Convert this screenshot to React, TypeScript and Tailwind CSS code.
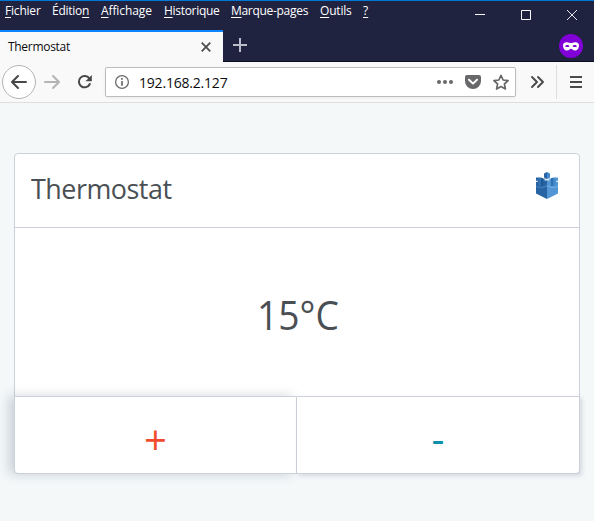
import React from "react";

const menus = [
  { key: "F", rest: "ichier", style: "w-[47px] tracking-[-0.2px]" },
  { key: "n", before: "Éditio", rest: "", style: "w-[49px] tracking-[-0.25px]" },
  { key: "A", rest: "ffichage", style: "w-[63px] tracking-[-0.1px]" },
  { key: "H", rest: "istorique", style: "w-[67px] tracking-[-0.3px]" },
  { key: "M", rest: "arque-pages", style: "w-[89px] tracking-[-0.3px]" },
  { key: "O", rest: "utils", style: "w-[43px] tracking-[-0.2px]" },
  { key: "?", rest: "", style: "w-[12px]" },
];

function TitleBar() {
  return (
    <div className="flex h-[30px] shrink-0 items-start justify-between border-t border-[#0078d7]">
      <div className="flex pl-[5px] pt-[2px] text-[12px] leading-[16px] text-white">
        {menus.map((m) => (
          <span key={m.key} className={`whitespace-nowrap ${m.style}`}>
            {m.before}
            <span className="underline underline-offset-2">{m.key}</span>
            {m.rest}
          </span>
        ))}
      </div>
      <svg width="138" height="29" viewBox="456 1 138 29" fill="none" stroke="#fff" className="shrink-0">
        <path d="M475 14.5h10M521.5 10.5h9v9h-9z" />
        <path d="M567 10l10 10M577 10l-10 10" strokeWidth=".9" />
      </svg>
    </div>
  );
}

function TabStrip() {
  return (
    <div className="flex h-8 shrink-0 border-b border-[#0c0c1f]">
      <div className="-mb-px flex w-[223px] items-center justify-between border-t-2 border-[#0a84ff] bg-[#f9f9fa] pl-2 pr-3 text-[12px] text-[#0c0c0d]">
        <span className="tracking-[-0.3px]">Thermostat</span>
        <svg width="10" height="10" viewBox="0 0 10 10" stroke="#4a4a4c" strokeWidth="1.7">
          <path d="M.7.7l8.6 8.6M9.3.7L.7 9.3" />
        </svg>
      </div>
      <svg width="34" height="31" viewBox="223 30 34 31" stroke="#bcbdca" strokeWidth="2">
        <path d="M233 45h14M240 38v14" />
      </svg>
      <div className="grow" />
      <svg width="40" height="31" viewBox="554 30 40 31">
        <circle cx="571" cy="46" r="12" fill="#8000d7" />
        <path
          d="M563 45.2c0-2.4 2-3.2 4.2-3 1.6.1 2.5.9 3.8.9s2.200-.8 3.800-.9c2.200-.2 4.200.6 4.200 3 0 3-1.500 5.300-4.200 5.300-2 0-2.600-1.700-3.800-1.700s-1.800 1.700-3.800 1.700c-2.700 0-4.200-2.300-4.200-5.300z"
          fill="#fff"
        />
        <path d="M565 46.200c1-1.600 3.500-1.600 4.500 0-1 1.200-3.500 1.200-4.500 0zM572.500 46.200c1-1.600 3.500-1.600 4.500 0-1 1.200-3.500 1.200-4.500 0z" fill="#8000d7" />
      </svg>
    </div>
  );
}

function NavBar() {
  return (
    <div className="flex h-[41px] shrink-0 items-center border-b border-[#dededf] bg-[#f9f9fa]">
      <svg width="105" height="40" viewBox="0 62 105 40" fill="none" strokeWidth="2" strokeLinecap="round" strokeLinejoin="round" className="shrink-0">
        <circle cx="19" cy="82" r="16.500" fill="#fff" stroke="#b4b4b5" strokeWidth="1" />
        <path d="M26 82H12.500M18 76l-6 6 6 6" stroke="#47474a" />
        <path d="M45 82h13.500M53 76l6 6-6 6" stroke="#b4b4b5" />
        <path d="M89.300 78.400a5.700 5.700 0 1 0 .5 5.600" stroke="#47474a" />
        <path d="M91.800 75v6.200h-6.300z" fill="#47474a" />
      </svg>
      <div className="flex h-[30px] w-[411px] shrink-0 items-center rounded-[2px] border border-[#bdbdbe] bg-white shadow-[0_1px_3px_rgba(0,0,0,0.06)]">
        <svg width="33" height="28" viewBox="106 68 33 28" fill="none" stroke="#6b6b6d">
          <circle cx="122" cy="82" r="6.400" strokeWidth="1.300" />
          <path d="M122 81v4.700M122 78v1.700" strokeWidth="1.700" />
        </svg>
        <span className="grow pt-[2px] text-[14px] leading-5 tracking-[-0.2px] text-[#0c0c0d]">192.168.2.127</span>
        <svg width="80" height="28" viewBox="435 68 80 28" fill="#68686a">
          <circle cx="439" cy="82" r="2" />
          <circle cx="445" cy="82" r="2" />
          <circle cx="451" cy="82" r="2" />
          <path d="M467 75h12q2 0 2 2v4a8 8 0 0 1-16 0v-4q0-2 2-2z" />
          <path d="M469 79.800l4 3.800 4-3.800" fill="none" stroke="#fff" strokeWidth="2" strokeLinecap="round" strokeLinejoin="round" />
          <path d="M501 75.400l2.100 4.600 5 .6-3.700 3.400 1 5-4.400-2.500-4.400 2.500 1-5-3.700-3.400 5-.6z" fill="none" stroke="#68686a" strokeWidth="1.700" strokeLinejoin="round" />
        </svg>
      </div>
      <svg width="78" height="40" viewBox="516 62 78 40" fill="none" stroke="#4a4a4c" strokeWidth="2" strokeLinecap="round" strokeLinejoin="round">
        <path d="M532 77l5 5-5 5M538 77l5 5-5 5" strokeWidth="1.900" />
        <path d="M556.500 65v34" stroke="#dededf" strokeWidth="1" strokeLinecap="butt" />
        <path d="M570 77h12M570 82h12M570 87h12" strokeLinecap="butt" />
      </svg>
    </div>
  );
}

function AwsLogo() {
  return (
    <svg width="24" height="28" viewBox="0 0 24 28" className="mt-[18px]">
      <path d="M1 5.500h5l2 1h4V27L1 21.500z" fill="#2864a4" />
      <path d="M23 5.500h-5l-2 1h-4V27l11-5.500z" fill="#5296d6" />
      <path d="M3.500 6h4v8l-4-.5z" fill="#2f72b3" />
      <path d="M6 6l2 .5V14l-2-.5z" fill="#1f5792" />
      <path d="M20.500 6h-4v8l4-.5z" fill="#4289cc" />
      <path d="M18 6l-2 .5V14l2-.5z" fill="#2f6dac" />
      <path d="M1 14l3 .8h4l4-1.600v1.200l-4 1.400H4L1 15z" fill="#4583bf" />
      <path d="M23 14l-3 .8h-4l-4-1.600v1.200l4 1.400h4l3-.8z" fill="#77ade0" />
      <path d="M12 0L9 1.500v4l3 1.300z" fill="#2864a4" />
      <path d="M12 0l3 1.500v4l-3 1.300z" fill="#4089cd" />
      <path d="M9.500 7h5v1.500h-5z" fill="#dbe7f2" />
      <path d="M1 8.700h1.800V10H1zM21.200 8.700H23V10h-1.800z" fill="#dbe7f2" />
    </svg>
  );
}

function ThermostatCard() {
  return (
    <section className="mx-[14px] mt-[50px] flex h-[321px] w-[566px] flex-col rounded-[4px] border border-[#ccd1d9] bg-white text-[#4a4f54]">
      <header className="flex h-[74px] shrink-0 items-start justify-between border-b border-[#ccd1d9] pl-4 pr-[20px]">
        <h1 className="origin-left scale-x-[0.96] pt-[14px] text-[28px] leading-10 tracking-[-0.5px]">Thermostat</h1>
        <AwsLogo />
      </header>
      <div className="flex h-[168px] shrink-0 items-center justify-center pt-[6px] text-[40px] leading-none">
        <span className="scale-x-[0.93] pl-[2px]">15°C</span>
      </div>
      <div className="isolate -mx-px -mb-px flex grow">
        <button className="flex w-[283px] items-center justify-center rounded-bl-[4px] border border-[#ccd1d9] bg-white pt-[9px] text-[40px] leading-none text-[#f04b2d] shadow-[-5px_0_12px_rgba(70,80,110,0.24)]">
          +
        </button>
        <button className="flex w-[283px] items-center justify-center rounded-br-[4px] border border-l-0 border-[#ccd1d9] bg-white pt-[6px] text-[40px] leading-none text-[#0d8fae] shadow-[2px_2px_4px_rgba(70,80,110,0.18)]">
          -
        </button>
      </div>
    </section>
  );
}

export default function App() {
  return (
    <main className="flex h-[521px] w-[594px] flex-col overflow-hidden bg-[#f4f8f9] font-['Open_Sans','Noto_Sans',sans-serif]">
      <div className="flex flex-col bg-[#20233f]">
        <TitleBar />
        <TabStrip />
        <NavBar />
      </div>
      <ThermostatCard />
    </main>
  );
}
